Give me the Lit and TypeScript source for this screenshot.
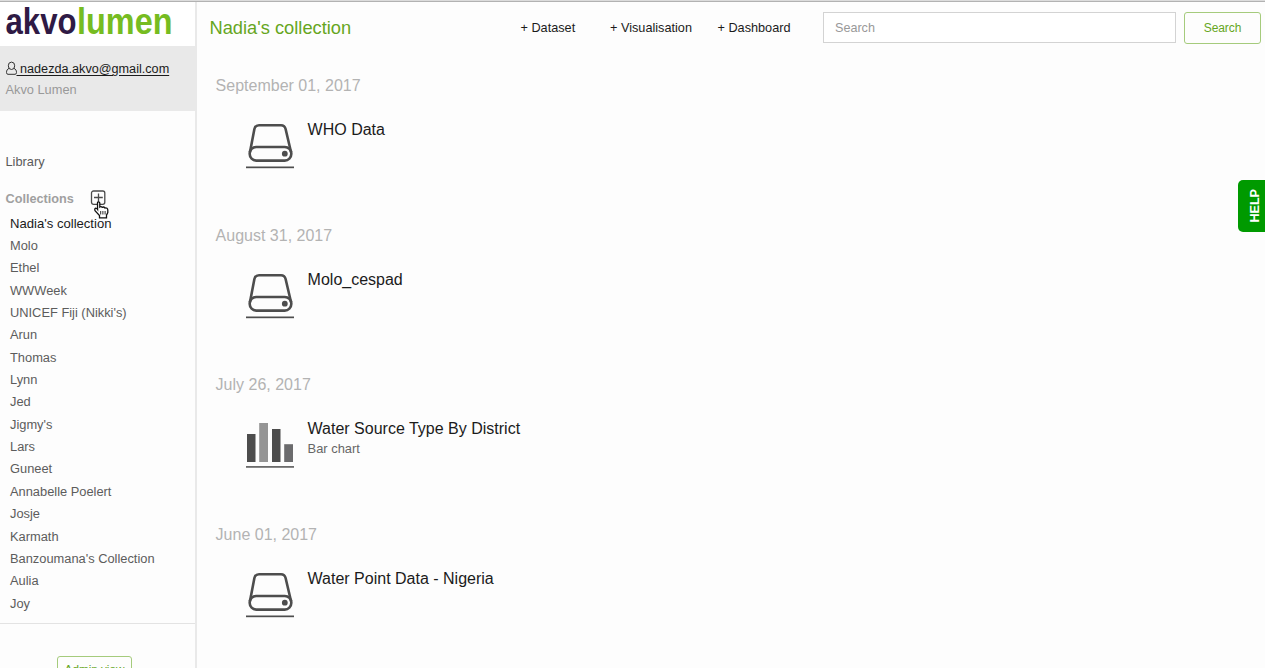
import { LitElement, html, css, svg, nothing } from "lit";
import { customElement, property } from "lit/decorators.js";

type Kind = "dataset" | "bar";
interface Entry {
  date: string;
  title: string;
  kind: Kind;
  subtitle?: string;
}

const COLLECTIONS = [
  "Nadia's collection", "Molo", "Ethel", "WWWeek", "UNICEF Fiji (Nikki's)", "Arun",
  "Thomas", "Lynn", "Jed", "Jigmy's", "Lars", "Guneet", "Annabelle Poelert", "Josje",
  "Karmath", "Banzoumana's Collection", "Aulia", "Joy",
];

const ENTRIES: Entry[] = [
  { date: "September 01, 2017", title: "WHO Data", kind: "dataset" },
  { date: "August 31, 2017", title: "Molo_cespad", kind: "dataset" },
  { date: "July 26, 2017", title: "Water Source Type By District", kind: "bar", subtitle: "Bar chart" },
  { date: "June 01, 2017", title: "Water Point Data - Nigeria", kind: "dataset" },
];

const driveIcon = svg`
  <g fill="none" stroke="#4d4d4d" stroke-width="2.6" stroke-linejoin="round">
    <path d="M4 32 L8.4 9 Q9.300 5.200 13 5.200 H35 Q38.700 5.200 39.600 9 L45 32"/>
    <rect x="3.700" y="27" width="41.600" height="13.600" rx="6.500"/>
  </g>
  <circle cx="38.800" cy="33.700" r="2.900" fill="#4d4d4d"/>
  <rect x="0" y="46.500" width="48" height="1.700" fill="#4d4d4d"/>`;

const barIcon = svg`
  <rect x="1" y="15" width="8.500" height="28" fill="#4d4d4d"/>
  <rect x="13.200" y="4" width="8.800" height="39" fill="#959595"/>
  <rect x="26" y="10" width="8.500" height="33" fill="#4d4d4d"/>
  <rect x="38.200" y="25.200" width="8.800" height="17.800" fill="#6b6b6d"/>
  <rect x="0" y="47" width="48" height="1.800" fill="#6b6b6b"/>`;

@customElement("lumen-sidebar")
export class LumenSidebar extends LitElement {
  static styles = css`
    :host { display: flex; flex-direction: column; width: 195px; flex: none; border-right: 2px solid #e9e9e9; overflow: hidden; box-sizing: content-box; }
    .logo { height: 44px; flex: none; background: #fff; }
    .logo svg { display: block; }
    .logo text { font-family: "Liberation Sans Narrow", "Liberation Sans", Arial, sans-serif; font-weight: 700; font-size: 36px; }
    .account { background: #e9e9e9; height: 65px; flex: none; padding: 14px 0 0 5.500px; box-sizing: border-box; }
    .user { display: flex; height: 18px; line-height: 18px; font-size: 12.65px; color: #1b1b1b; }
    .user svg { flex: none; margin-top: 1px; }
    .mail { text-decoration: underline; text-underline-offset: 2px; white-space: pre; }
    .tenant { margin-top: 3px; line-height: 18px; font-size: 12.8px; color: #999; }
    .library { margin-top: 42px; height: 18px; line-height: 18px; color: #5a5a5a; flex: none; padding-left: 5.500px; font-size: 12.8px; }
    .heading { margin-top: 19px; height: 18px; line-height: 18px; flex: none; display: flex; padding-left: 5.500px; color: #a0a0a0; font-weight: 700; font-size: 12.7px; }
    .name { width: 84.500px; }
    .add { position: relative; width: 16px; height: 16px; }
    .cursor { position: absolute; left: 3px; top: 11px; z-index: 2; }
    ul { list-style: none; margin: 4.700px 0 0; padding: 0 0 8px 10px; border-bottom: 1px solid #e3e3e3; flex: none; }
    li { height: 22.35px; line-height: 22.35px; font-size: 12.85px; color: #5c5c5c; white-space: nowrap; }
    .current { color: #1b1b1b; font-size: 13.1px; }
    .admin { margin: 32px 0 0 57px; width: 75px; height: 26px; box-sizing: border-box; flex: none; border: 1px solid #a5cb7c; border-radius: 3px; background: transparent; color: #66a61e; font: 11.700px/20px "Liberation Sans", Arial, sans-serif; padding: 1px 0 0; white-space: nowrap; }
  `;
  render() {
    return html`
      <div class="logo">
        <svg width="195" height="44" viewBox="0 2 195 44">
          <text x="5.500" y="34" fill="#2f1a45" textLength="71" lengthAdjust="spacingAndGlyphs">akvo</text>
          <text x="77" y="34" fill="#76bc21" textLength="95.500" lengthAdjust="spacingAndGlyphs">lumen</text>
        </svg>
      </div>
      <div class="account">
        <div class="user">
          <svg width="11" height="16" viewBox="0 0 11 16" fill="none" stroke="#333" stroke-width="1">
            <ellipse cx="5.500" cy="4.800" rx="3.200" ry="3.700"/>
            <path d="M3.200 7.300 C1.300 8 .5 9.500 .5 11.500 Q.5 13.300 2 13.300 H9 Q10.500 13.300 10.500 11.500 C10.500 9.500 9.700 8 7.800 7.300"/>
          </svg><span class="mail"> nadezda.akvo@gmail.com</span>
        </div>
        <div class="tenant">Akvo Lumen</div>
      </div>
      <div class="library">Library</div>
      <div class="heading">
        <span class="name">Collections</span>
        <span class="add">
          <svg width="16" height="16" viewBox="0 0 16 16" fill="none" stroke="#4a4a4a" stroke-width="1.300">
            <rect x="1.500" y="1" width="13.300" height="13.300" rx="2"/>
            <path d="M8.500 3.500V12M4 7.500H12.800"/>
          </svg>
          <svg class="cursor" width="17" height="18" viewBox="0 0 17 18">
            <path d="M4.500 2.200Q4.500 .8 5.500 .8T6.800 2V6Q8.200 5 9.200 6.300Q11 5.500 11.900 7Q14.700 6.400 14.800 9V11.500L13.500 14.200V16.800H6.500V14.500L2 9.600Q1.300 7.600 2.700 7.200Q3.800 7.200 4.600 8.500Z" fill="#fff" stroke="#111" stroke-width="1.300"/>
            <path d="M7.700 10V13.500M9.900 10V13.500M12.100 10V13.500" stroke="#111" stroke-width=".9"/>
          </svg>
        </span>
      </div>
      <ul>${COLLECTIONS.map((c, i) => html`<li class=${i ? "" : "current"}>${c}</li>`)}</ul>
      <button class="admin">Admin view</button>`;
  }
}

@customElement("library-entry")
export class LibraryEntry extends LitElement {
  static styles = css`
    :host { display: block; height: 149.5px; }
    .date { margin: 0; font-weight: 400; font-size: 16px; line-height: 20px; color: #b3b3b3; }
    .row { display: flex; padding: 24.300px 0 0 30px; }
    svg { flex: none; }
    .text { padding-left: 14px; }
    .title { font-size: 16px; line-height: 20px; color: #1b1b1b; }
    .sub { font-size: 12.9px; line-height: 19px; color: #666; }
  `;
  @property({ attribute: false }) entry!: Entry;
  render() {
    const e = this.entry;
    return html`
      <h2 class="date">${e.date}</h2>
      <div class="row">
        <svg width="48" height="50" viewBox="0 0 48 50">${e.kind === "bar" ? barIcon : driveIcon}</svg>
        <div class="text">
          <div class="title">${e.title}</div>
          ${e.subtitle ? html`<div class="sub">${e.subtitle}</div>` : nothing}
        </div>
      </div>`;
  }
}

@customElement("app-root")
export class AppRoot extends LitElement {
  static styles = css`
    :host { display: flex; position: relative; box-sizing: border-box; width: 100%; height: 668px; overflow: hidden; background: #fdfdfd; border-top: 1px solid #dcdcdc; font-family: "Liberation Sans", Arial, sans-serif; }
    .frame { display: flex; flex: 1; border-top: 1px solid #b2b2b2; min-width: 0; }
    main { flex: 1; min-width: 0; }
    header { display: flex; height: 52px; align-items: center; padding: 0 4px 0 12.500px; box-sizing: border-box; }
    h1 { margin: 0; font-weight: 400; font-size: 18.3px; color: #66a61e; width: 311px; white-space: nowrap; }
    nav { display: flex; font-size: 12.7px; color: #1b1b1b; white-space: nowrap; }
    .dataset { width: 89.500px; }
    .visual { width: 107.500px; }
    .dash { width: 105.500px; }
    .field { flex: 1; min-width: 0; height: 31px; box-sizing: border-box; border: 1px solid #d3d3d3; background: #fff; padding: 1px 11px 0; font: 12.6px "Liberation Sans", Arial, sans-serif; margin: 0 8px 1px 0; }
    .field::placeholder { color: #999; opacity: 1; }
    .go { width: 77px; height: 32px; box-sizing: border-box; border: 1px solid #a5cb7c; border-radius: 3px; background: transparent; color: #66a61e; font: 12px "Liberation Sans", Arial, sans-serif; letter-spacing: -0.1px; padding: 0; }
    .list { padding: 22px 0 0 18.600px; }
    .help { position: absolute; right: 0; top: 179px; width: 27px; height: 52px; background: #009a00; color: #fff; border-radius: 5px 0 0 5px; display: flex; align-items: center; justify-content: center; }
    .label { writing-mode: vertical-rl; transform: rotate(180deg); font-weight: 700; font-size: 12.6px; margin-left: 6px; line-height: 16px; }
  `;
  render() {
    return html`
      <div class="frame">
        <lumen-sidebar></lumen-sidebar>
        <main>
          <header>
            <h1>Nadia's collection</h1>
            <nav>
              <span class="dataset">+ Dataset</span>
              <span class="visual">+ Visualisation</span>
              <span class="dash">+ Dashboard</span>
            </nav>
            <input class="field" placeholder="Search" />
            <button class="go">Search</button>
          </header>
          <div class="list">${ENTRIES.map((e) => html`<library-entry .entry=${e}></library-entry>`)}</div>
        </main>
      </div>
      <div class="help"><span class="label">HELP</span></div>`;
  }
}
